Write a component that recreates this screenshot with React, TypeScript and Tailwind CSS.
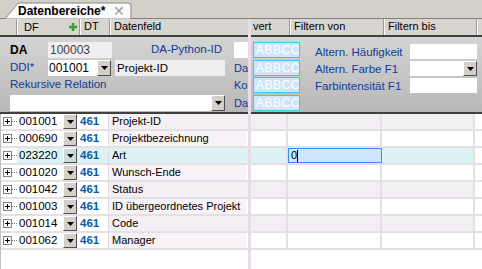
import React from "react";

const FONT = { fontFamily: '"Liberation Sans", Arial, sans-serif' };

function DropBtn({ tone = "gray" }: { tone?: "gray" | "cyan" }) {
  return (
    <div
      className={`w-[14px] h-full shrink-0 border border-t-white border-l-white border-r-[#505050] border-b-[#505050] flex items-center justify-center ${
        tone === "cyan" ? "bg-[#c8dcdc]" : "bg-[#d4d0c8]"
      }`}
    >
      <svg width="7" height="4" viewBox="0 0 7 4">
        <path d="M0 0h7L3.5 4z" fill="#000" />
      </svg>
    </div>
  );
}

function Expander() {
  return (
    <div className="w-[17px] h-full shrink-0 flex items-center pl-[3px]">
      <svg width="14" height="9" viewBox="0 0 14 9">
        <rect x="0.5" y="0.5" width="8" height="8" fill="#fff" stroke="#808080" />
        <path d="M2 4.5h5M4.5 2v5" stroke="#000" strokeWidth="1" />
        <path d="M9 4.5h5" stroke="#808080" strokeDasharray="1 1" />
      </svg>
    </div>
  );
}

const rows = [
  { df: "001001", name: "Projekt-ID" },
  { df: "000690", name: "Projektbezeichnung" },
  { df: "023220", name: "Art", sel: true },
  { df: "001020", name: "Wunsch-Ende" },
  { df: "001042", name: "Status" },
  { df: "001003", name: "ID übergeordnetes Projekt" },
  { df: "001014", name: "Code" },
  { df: "001062", name: "Manager" },
];

function Abbcc() {
  return (
    <div className="w-[47px] h-[16px] shrink-0 bg-[#cde6fa] border border-[#3cc8f0] text-white text-[12px] leading-[14px] pl-[2px] tracking-[0.5px]">
      ABBCC
    </div>
  );
}

export default function App() {
  return (
    <div
      className="relative w-[482px] h-[269px] overflow-hidden bg-white text-[11px] text-black"
      style={FONT}
    >
      {/* tab strip */}
      <div className="h-[19px] bg-[#d4d0c8] border-b border-[#808080] flex items-end">
        <div className="relative ml-[5px] w-[128px] h-[17px] -mb-px">
          <svg className="absolute inset-0" width="128" height="17" viewBox="0 0 128 17">
            <path d="M0 17 L13 1 L123 1 Q126 1 126 4 L126 17 Z" fill="#fafafa" stroke="#8a8a8a" />
          </svg>
          <div className="relative flex items-center h-full pl-[13px] gap-[8px]">
            <span className="font-bold text-[12px] leading-none">Datenbereiche*</span>
            <span className="text-[#a0a0a0] text-[14px] leading-none">✕</span>
          </div>
        </div>
      </div>

      {/* header */}
      <div className="h-[16px] flex bg-[#d8d4d0] text-[11px] leading-[15px]">
        <div className="w-[17px] border-r border-[#9a9a9a]" />
        <div className="w-[63px] border-r border-[#9a9a9a] border-l border-l-white flex items-center pl-[6px] pr-[2px]">
          <span className="flex-1">DF</span>
          <svg width="8" height="8" viewBox="0 0 8 8">
            <path d="M3 0h2v3h3v2H5v3H3V5H0V3h3z" fill="#2db82d" stroke="#147a14" strokeWidth="0.4" />
          </svg>
        </div>
        <div className="w-[30px] border-r border-[#9a9a9a] border-l border-l-white pl-[3px]">DT</div>
        <div className="w-[138px] border-l border-l-white pl-[3px]">Datenfeld</div>
        <div className="w-[42px] border-r border-[#9a9a9a] pl-[5px]">vert</div>
        <div className="w-[94px] border-r border-[#9a9a9a] border-l border-l-white pl-[3px]">Filtern von</div>
        <div className="w-[93px] border-r border-[#9a9a9a] border-l border-l-white pl-[3px]">Filtern bis</div>
        <div className="flex-1 border-l border-l-white" />
      </div>
      <div className="h-[2px] bg-[#404040]" />

      {/* form panel */}
      <div className="h-[75px] bg-linear-to-b from-[#d4d4d4] to-[#b8b8b8] flex pt-[5px] text-[11px]">
        {/* left block */}
        <div className="w-[234px] flex flex-col">
          <div className="h-[16px] flex items-center">
            <span className="w-[48px] pl-[10px] font-bold text-[12px]">DA</span>
            <div className="w-[64px] h-full bg-[#f0eeee] text-[#404040] text-[12px] leading-[16px] pl-[2px]">100003</div>
            <span className="w-[110px] text-right text-[#0e3c9a] text-[11.5px]">DA-Python-ID</span>
          </div>
          <div className="h-[16px] flex items-center mt-[2px]">
            <span className="w-[48px] pl-[10px] text-[#0e3c9a] text-[11.5px]">DDI*</span>
            <div className="w-[63px] h-full bg-white flex">
              <span className="flex-1 text-[12px] leading-[16px] pl-[1px]">001001</span>
              <DropBtn />
            </div>
            <div className="ml-[4px] w-[110px] h-full bg-[#eeeeee] text-[11.5px] leading-[16px] pl-[2px]">Projekt-ID</div>
          </div>
          <div className="h-[16px] flex items-center mt-[1px] pl-[10px] text-[#0e3c9a] text-[11.5px]">Rekursive Relation</div>
          <div className="h-[16px] flex mt-[2px] pl-[10px]">
            <div className="w-[215px] h-full bg-white flex justify-end">
              <DropBtn />
            </div>
          </div>
        </div>
        {/* middle block */}
        <div className="w-[66px] flex flex-col text-[#0e3c9a] text-[11px] leading-[16px]">
          <div className="h-[16px] flex">
            <div className="w-[15px] h-full bg-white shrink-0" />
            <div className="w-[4px] shrink-0" />
            <Abbcc />
          </div>
          <div className="h-[16px] flex mt-[2px]">
            <span className="w-[19px] shrink-0 whitespace-nowrap">Dat</span>
            <Abbcc />
          </div>
          <div className="h-[16px] flex mt-[1px]">
            <span className="w-[19px] shrink-0 whitespace-nowrap">Kor</span>
            <Abbcc />
          </div>
          <div className="h-[16px] flex mt-[2px]">
            <span className="w-[19px] shrink-0 whitespace-nowrap">Dat</span>
            <Abbcc />
          </div>
        </div>
        {/* right block */}
        <div className="ml-[15px] flex flex-col text-[#0e3c9a] text-[11.5px] leading-[16px]">
          <div className="h-[15px] flex mt-[2px]">
            <span className="w-[95px]">Altern. Häufigkeit</span>
            <div className="w-[67px] h-full bg-white" />
          </div>
          <div className="h-[15px] flex mt-[2px]">
            <span className="w-[95px]">Altern. Farbe F1</span>
            <div className="w-[67px] h-full bg-white flex justify-end">
              <DropBtn />
            </div>
          </div>
          <div className="h-[15px] flex mt-[2px]">
            <span className="w-[95px]">Farbintensität F1</span>
            <div className="w-[67px] h-full bg-white" />
          </div>
        </div>
      </div>
      <div className="h-[2px] bg-[#404040]" />

      {/* rows */}
      <div className="flex flex-col">
        {rows.map((r, i) => {
          const odd = i % 2 === 0;
          const sel = !!r.sel;
          const rightBg = sel ? "bg-[#ddf3f3]" : odd ? "bg-[#f1eff1]" : "bg-white";
          const nameBg = sel ? "bg-[#ddf3f3]" : odd ? "bg-[#f3eff3]" : "bg-[#f6f2f6]";
          return (
            <div key={r.df} className="h-[17px] flex border-b-2 border-[#e4e0e6] text-[11px] leading-[15px]">
              <Expander />
              <div className={`w-[46px] h-full pl-[2px] text-[11.5px] ${sel ? "bg-[#ddf3f3]" : "bg-white"}`}>{r.df}</div>
              <DropBtn tone={sel ? "cyan" : "gray"} />
              <div className={`w-[31px] h-full pl-[3px] font-bold text-[11.5px] text-[#0a5aa8] ${sel ? "bg-[#ddf3f3]" : "bg-white"}`}>461</div>
              <div className={`w-[138px] h-full pl-[3px] border-l border-[#e0dce0] whitespace-nowrap overflow-hidden ${nameBg}`}>{r.name}</div>
              <div className={`w-[42px] h-full border-r-2 border-[#e4e0e6] ${rightBg}`} />
              {sel ? (
                <div className="w-[94px] h-full bg-[#cfe5f9] border border-[#3c8fe8] pl-[2px] flex items-center">
                  <span>0</span>
                  <span className="w-px h-[12px] bg-black" />
                </div>
              ) : (
                <div className={`w-[94px] h-full border-r-2 border-[#e4e0e6] ${rightBg}`} />
              )}
              <div className={`w-[93px] h-full border-r-2 border-[#e4e0e6] ${rightBg}`} />
              <div className="flex-1 h-full bg-white" />
            </div>
          );
        })}
      </div>

      {/* splitter overlay */}
      <div className="absolute left-[248px] top-[19px] bottom-0 w-[3px] bg-[#e8dcea]" />
      {/* left edge line */}
      <div className="absolute left-0 top-[114px] bottom-0 w-px bg-[#c0c0c0]" />
    </div>
  );
}
